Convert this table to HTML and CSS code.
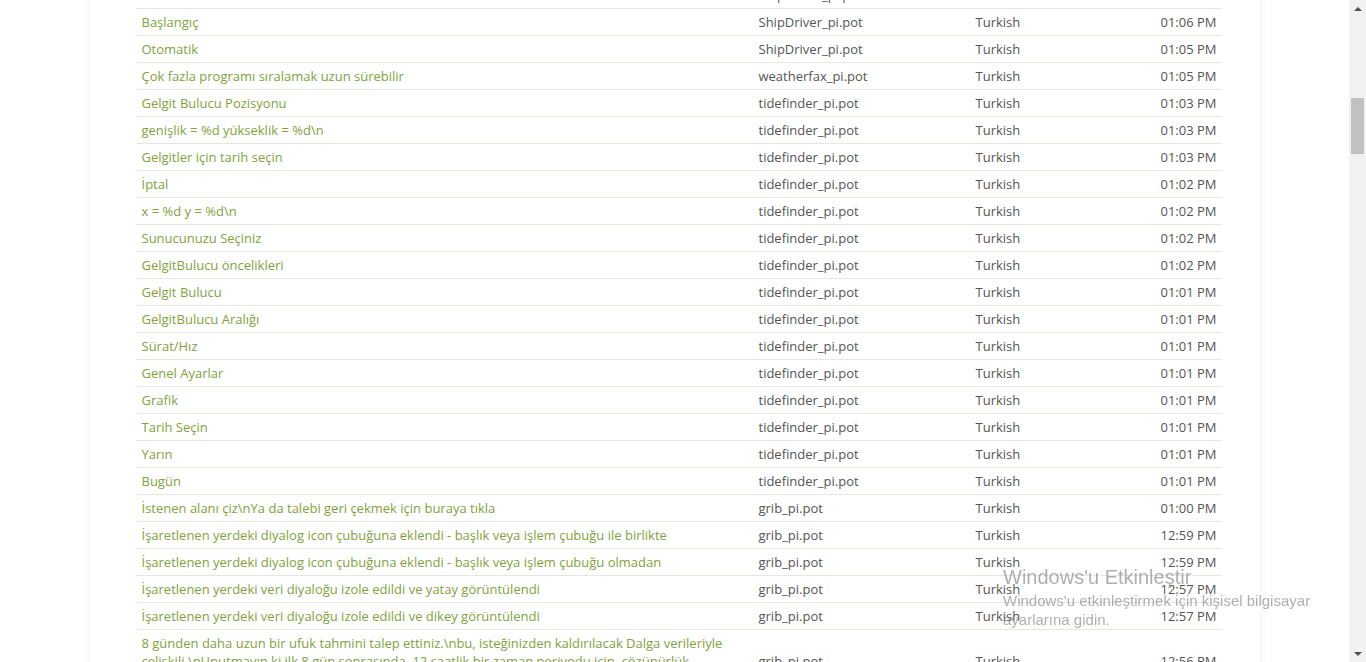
FILE: index.html
```html
<!DOCTYPE html>
<html lang="tr">
<head>
<meta charset="utf-8">
<title>Çeviriler</title>
<link rel="stylesheet" href="styles.css">
</head>
<body>
<div class="layout">
  <div class="page">
    <div class="card">
      <table class="list">
        <colgroup>
          <col class="c-name"><col class="c-file"><col class="c-lang"><col class="c-time">
        </colgroup>
        <tbody>
          <tr class="first"><td><a href="#">Durdur</a></td><td>ShipDriver_pi.pot</td><td>Turkish</td><td class="t">01:06 PM</td></tr>
          <tr><td><a href="#">Başlangıç</a></td><td>ShipDriver_pi.pot</td><td>Turkish</td><td class="t">01:06 PM</td></tr>
          <tr><td><a href="#">Otomatik</a></td><td>ShipDriver_pi.pot</td><td>Turkish</td><td class="t">01:05 PM</td></tr>
          <tr><td><a href="#">Çok fazla programı sıralamak uzun sürebilir</a></td><td>weatherfax_pi.pot</td><td>Turkish</td><td class="t">01:05 PM</td></tr>
          <tr><td><a href="#">Gelgit Bulucu Pozisyonu</a></td><td>tidefinder_pi.pot</td><td>Turkish</td><td class="t">01:03 PM</td></tr>
          <tr><td><a href="#">genişlik = %d yükseklik = %d\n</a></td><td>tidefinder_pi.pot</td><td>Turkish</td><td class="t">01:03 PM</td></tr>
          <tr><td><a href="#">Gelgitler için tarih seçin</a></td><td>tidefinder_pi.pot</td><td>Turkish</td><td class="t">01:03 PM</td></tr>
          <tr><td><a href="#">İptal</a></td><td>tidefinder_pi.pot</td><td>Turkish</td><td class="t">01:02 PM</td></tr>
          <tr><td><a href="#">x = %d y = %d\n</a></td><td>tidefinder_pi.pot</td><td>Turkish</td><td class="t">01:02 PM</td></tr>
          <tr><td><a href="#">Sunucunuzu Seçiniz</a></td><td>tidefinder_pi.pot</td><td>Turkish</td><td class="t">01:02 PM</td></tr>
          <tr><td><a href="#">GelgitBulucu öncelikleri</a></td><td>tidefinder_pi.pot</td><td>Turkish</td><td class="t">01:02 PM</td></tr>
          <tr><td><a href="#">Gelgit Bulucu</a></td><td>tidefinder_pi.pot</td><td>Turkish</td><td class="t">01:01 PM</td></tr>
          <tr><td><a href="#">GelgitBulucu Aralığı</a></td><td>tidefinder_pi.pot</td><td>Turkish</td><td class="t">01:01 PM</td></tr>
          <tr><td><a href="#">Sürat/Hız</a></td><td>tidefinder_pi.pot</td><td>Turkish</td><td class="t">01:01 PM</td></tr>
          <tr><td><a href="#">Genel Ayarlar</a></td><td>tidefinder_pi.pot</td><td>Turkish</td><td class="t">01:01 PM</td></tr>
          <tr><td><a href="#">Grafik</a></td><td>tidefinder_pi.pot</td><td>Turkish</td><td class="t">01:01 PM</td></tr>
          <tr><td><a href="#">Tarih Seçin</a></td><td>tidefinder_pi.pot</td><td>Turkish</td><td class="t">01:01 PM</td></tr>
          <tr><td><a href="#">Yarın</a></td><td>tidefinder_pi.pot</td><td>Turkish</td><td class="t">01:01 PM</td></tr>
          <tr><td><a href="#">Bugün</a></td><td>tidefinder_pi.pot</td><td>Turkish</td><td class="t">01:01 PM</td></tr>
          <tr><td><a href="#">İstenen alanı çiz\nYa da talebi geri çekmek için buraya tıkla</a></td><td>grib_pi.pot</td><td>Turkish</td><td class="t">01:00 PM</td></tr>
          <tr><td><a href="#">İşaretlenen yerdeki diyalog icon çubuğuna eklendi - başlık veya işlem çubuğu ile birlikte</a></td><td>grib_pi.pot</td><td>Turkish</td><td class="t">12:59 PM</td></tr>
          <tr><td><a href="#">İşaretlenen yerdeki diyalog icon çubuğuna eklendi - başlık veya işlem çubuğu olmadan</a></td><td>grib_pi.pot</td><td>Turkish</td><td class="t">12:59 PM</td></tr>
          <tr><td><a href="#">İşaretlenen yerdeki veri diyaloğu izole edildi ve yatay görüntülendi</a></td><td>grib_pi.pot</td><td>Turkish</td><td class="t">12:57 PM</td></tr>
          <tr><td><a href="#">İşaretlenen yerdeki veri diyaloğu izole edildi ve dikey görüntülendi</a></td><td>grib_pi.pot</td><td>Turkish</td><td class="t">12:57 PM</td></tr>
          <tr><td><a href="#">8 günden daha uzun bir ufuk tahmini talep ettiniz.\nbu, isteğinizden kaldırılacak Dalga verileriyle çelişkili.\nUnutmayın ki ilk 8 gün sonrasında, 12 saatlik bir zaman periyodu için, çözünürlük düşürülecek.</a></td><td>grib_pi.pot</td><td>Turkish</td><td class="t">12:56 PM</td></tr>
        </tbody>
      </table>
    </div>
  </div>
  <div class="scrollbar">
    <div class="sb-btn"><span class="arrow up"></span></div>
    <div class="sb-track"><div class="sb-thumb"></div></div>
    <div class="sb-btn"><span class="arrow down"></span></div>
  </div>
</div>
<div class="activate">
  <div class="act-title">Windows'u Etkinleştir</div>
  <div class="act-text">Windows'u etkinleştirmek için kişisel bilgisayar<br>ayarlarına gidin.</div>
</div>
</body>
</html>
```

FILE: styles.css
```css
html, body {
  margin: 0;
  padding: 0;
  background: #ffffff;
  font-family: "Open Sans", "Noto Sans", "DejaVu Sans", sans-serif;
  font-size: 13px;
  color: #555555;
}

.layout {
  display: flex;
  height: 662px;
  overflow: hidden;
}

.page {
  flex: 1;
  overflow: hidden;
}

.card {
  width: 1170px;
  box-sizing: border-box;
  margin: -18px auto 0;
  padding: 0 38px 0 47px;
  background: #ffffff;
  box-shadow: 0 0 9px rgba(0, 0, 0, 0.07);
  min-height: 800px;
}

.list {
  width: 100%;
  border-collapse: collapse;
  table-layout: fixed;
}

.c-name { width: 617px; }
.c-file { width: 217px; }
.c-lang { width: 150px; }

.list td {
  padding: 4px 5px;
  line-height: 18px;
  border-top: 1px solid #e8e6df;
  vertical-align: middle;
  color: #555555;
}

.list tr.first td {
  border-top: none;
}

.list td.t {
  text-align: right;
}

.list a {
  color: #80a340;
  text-decoration: none;
}

.scrollbar {
  width: 17px;
  flex: none;
  background: #f1f1f1;
  display: flex;
  flex-direction: column;
}

.sb-btn {
  height: 17px;
  display: flex;
  align-items: center;
  justify-content: center;
}

.arrow {
  width: 0;
  height: 0;
  border-left: 4px solid transparent;
  border-right: 4px solid transparent;
}

.arrow.up { border-bottom: 4px solid #505050; }
.arrow.down { border-top: 4px solid #505050; }

.sb-track {
  flex: 1;
  padding-top: 81px;
}

.sb-thumb {
  height: 56px;
  margin: 0 2px;
  background: #c1c1c1;
}

.activate {
  position: fixed;
  left: 1003px;
  top: 564px;
  font-family: "Liberation Sans", "Noto Sans", sans-serif;
  color: rgba(110, 110, 110, 0.55);
}

.act-title {
  font-size: 20px;
  line-height: 26px;
}

.act-text {
  font-size: 15px;
  line-height: 19px;
  margin-top: 1px;
}
```
